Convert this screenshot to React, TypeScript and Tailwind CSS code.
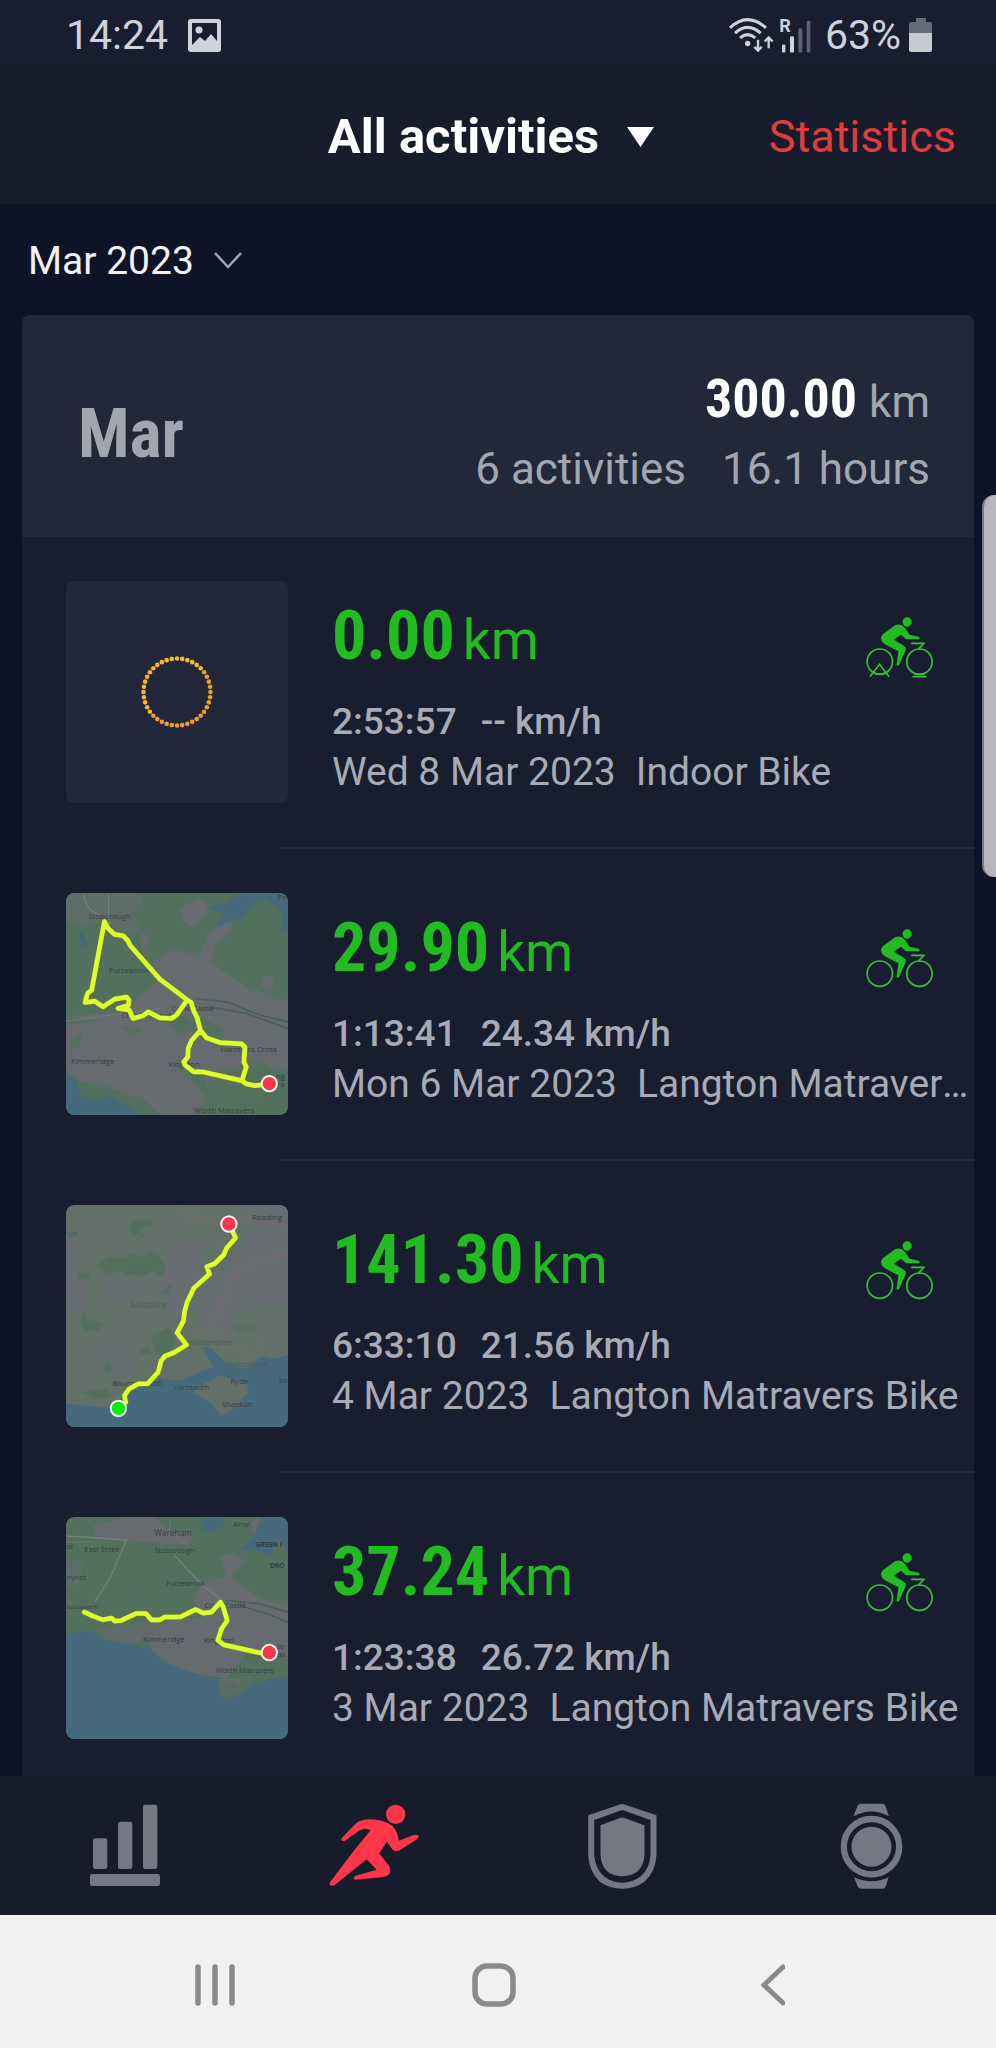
import React from "react";

type Activity = {
  distance: string;
  duration: string;
  speed: string;
  date: string;
  title: string;
  indoor?: boolean;
  thumb: React.ReactNode;
};

const ROUTE = "#dcff2e";

const Marker: React.FC<{ x: number; y: number; fill: string }> = ({ x, y, fill }) => (
  <circle cx={x} cy={y} r="23" fill={fill} stroke="#f4f4f4" strokeWidth="6" />
);

const Route: React.FC<{ d: string }> = ({ d }) => (
  <>
    <path d={d} fill="none" stroke="#6f7f35" strokeWidth="18" strokeLinejoin="round" strokeLinecap="round" />
    <path d={d} fill="none" stroke={ROUTE} strokeWidth="14" strokeLinejoin="round" strokeLinecap="round" />
  </>
);

const MAP_CLASS = "h-full w-full rounded-lg font-['Open_Sans',sans-serif]";

const IndoorThumb = () => (
  <svg viewBox="0 0 222 222" className="h-full w-full" aria-hidden="true">
    {Array.from({ length: 40 }, (_, i) => {
      const a = (i / 40) * Math.PI * 2;
      return (
        <circle
          key={i}
          cx={111 + 33.5 * Math.cos(a)}
          cy={111 + 33.5 * Math.sin(a)}
          r="2.3"
          fill={Math.cos(a) + Math.sin(a) > 0 ? "#f59a2c" : "#f8b52e"}
        />
      );
    })}
  </svg>
);

const LoopMap = () => (
  <svg viewBox="19 24 665 665" className={MAP_CLASS} aria-hidden="true">
    <rect x="19" y="24" width="665" height="665" fill="#52705d" />
    <g fill="#666b70">
      <path d="M19 24H250L245 60L210 85L240 120L225 150L170 130L130 110L60 125L19 110Z" opacity=".55" />
      <path d="M360 70L420 40L445 60L430 100L395 125L365 105Z" />
      <path d="M440 150L480 120L520 110L500 150L470 170L450 230L520 280L570 310L684 350V560L600 540L540 600L450 620L420 560L350 520L330 470L400 430L380 390L300 400L200 410L19 400V395L190 380L290 290L280 230L340 190L420 215Z" />
      <path d="M19 420L180 400L330 410L370 480L340 540L400 590L440 640L400 689H300L260 650L130 600L60 590L19 560Z" />
      <path d="M240 150L262 145L265 190L250 205Z" />
      <circle cx="624" cy="292" r="20" />
      <path d="M440 640L560 620L600 650L500 680Z" opacity=".6" />
    </g>
    <g fill="#52705d">
      <path d="M390 415L430 400L490 430L480 470L420 460Z" />
      <path d="M40 455L70 440L60 480L30 500Z" />
      <path d="M180 425L250 430L220 450Z" />
      <path d="M450 560L540 540L610 520L640 560L684 590V689H520L440 640Z" opacity=".8" />
      <path d="M60 590L130 600L230 640L300 689H120Z" />
    </g>
    <g fill="#466a7b">
      <path d="M19 565L50 585L60 630L110 645L150 630L240 689H19Z" />
      <path d="M450 65L500 55L540 24H684V130L665 140L670 80L640 60L620 40L590 50L560 80L540 110L520 95L480 125L465 120L500 85L455 75Z" />
      <path d="M58 145L70 140L75 160L84 180L75 192L62 165Z" />
    </g>
    <g fill="none" stroke="#7a8183" strokeWidth="3">
      <path d="M70 24Q80 85 130 90M146 24V90L150 120" />
      <path d="M19 408L190 385L300 370" strokeWidth="2" />
    </g>
    <g fill="none" stroke="#496252" strokeWidth="5">
      <path d="M400 340L500 350L600 390L684 410" />
      <path d="M450 365L560 385L684 430" />
    </g>
    <g fill="#343e45" fontSize="23">
      <text x="86" y="101">Stoborough</text>
      <text x="148" y="264">Furzebrook</text>
      <text x="335" y="376">Corfe Castle</text>
      <text x="186" y="398">Church Knowle</text>
      <text x="482" y="500">Harman's Cross</text>
      <text x="34" y="537">Kimmeridge</text>
      <text x="326" y="544">Kingston</text>
      <text x="648" y="580">ng</text>
      <text x="652" y="605">ra</text>
      <text x="402" y="683">Worth Matravers</text>
      <text x="652" y="46">Po</text>
    </g>
    <Route d="M134 110L145 130L165 148L190 152L203 165L212 182L300 282L382 344L394 352L402 378L412 398L422 436L395 466L385 490L384 515L372 530L376 540L402 560L430 560L545 586L560 596L585 601L615 598M422 436L440 458L480 472L545 476L555 486L552 530L559 545L548 580M134 110L96 315L84 324L76 352L105 348L130 365L165 342L200 336L208 345L206 360L175 370L208 374L220 400L250 392L265 380L300 398L335 400L350 390L360 376L382 344" />
    <Marker x={628} y={595} fill="#f83648" />
  </svg>
);

const NorthMap = () => (
  <svg viewBox="19 29 665 665" className={MAP_CLASS} aria-hidden="true">
    <rect x="19" y="29" width="665" height="665" fill="#62706a" />
    <g fill="#676c71">
      <path d="M560 29L684 29V330L600 330L520 360L500 420L420 380L430 290L500 230L580 100Z" />
      <path d="M330 150L430 130L430 230L400 300L350 380L320 330L300 270Z" />
      <path d="M19 130L70 140L50 200L80 300L60 360L19 330Z" />
      <path d="M130 240L260 260L240 310L180 320L120 290Z" opacity=".6" />
      <path d="M100 430L190 450L240 520L210 560L130 520Z" opacity=".6" />
    </g>
    <g fill="#53705e">
      <path d="M108 210L150 185L200 190L215 172L255 188L270 165L300 180L318 215L305 245L285 225L245 242L205 238L180 225L135 235Z" />
      <path d="M210 80L265 70L280 85L240 100L255 125L215 115Z" />
      <path d="M330 280L335 265L318 278L305 298L325 295Z" />
      <path d="M275 420L330 395L345 430L330 480L290 480Z" />
      <path d="M60 380L75 345L85 375L125 380L120 405L75 405Z" />
      <path d="M50 232H90L90 252H55Z" />
      <path d="M245 455H270V475H240Z" />
      <path d="M130 515L150 500L160 530L140 535Z" />
      <path d="M520 390L570 385L590 400L530 415Z" opacity=".6" />
      <path d="M60 590L140 580L160 600L110 610Z" />
    </g>
    <g fill="#466a7b">
      <path d="M19 625L110 632L160 640L200 590L260 570L300 548L360 556L420 530L460 515L440 480L430 450L455 460L500 505L560 520L610 480L640 490L684 480V694H19Z" />
    </g>
    <path d="M400 590L440 560L480 540L560 562L565 590L520 640L485 660L450 620Z" fill="#62706a" />
    <path d="M590 490L684 500V520L590 510Z" fill="#466a7b" />
    <g fill="none" stroke="#7b6862" strokeWidth="4">
      <path d="M355 35Q380 65 430 70L540 62L600 80L684 88" />
      <path d="M684 175L600 195L560 210L515 245L480 340L440 400L400 405L460 410L500 460L570 475" />
      <path d="M440 400L500 430M605 430V480" strokeWidth="3" />
    </g>
    <g fill="#343e45" fontSize="23">
      <text x="577" y="74" fontSize="24">Reading</text>
      <text x="158" y="570">Bournemouth</text>
      <text x="342" y="582">Yarmouth</text>
      <text x="512" y="565">Ryde</text>
      <text x="486" y="633">Shanklin</text>
      <text x="656" y="563">So</text>
    </g>
    <g fill="#505a5e" fontSize="26">
      <text x="210" y="338">Salisbury</text>
      <text x="24" y="124">un</text>
      <text x="385" y="449" fontSize="23">outhampton</text>
      <text x="498" y="515" fontSize="23">Portsmouth</text>
    </g>
    <Route d="M507 86L518 108L527 128L500 158L492 178L464 205L441 214L449 236L402 278L382 320L374 350L371 376L352 412L380 448L345 470L315 482L304 496L295 530L264 564L235 565L208 580L194 600L198 620L178 636" />
    <Marker x={507} y={86} fill="#f83648" />
    <Marker x={176} y={638} fill="#08ec08" />
  </svg>
);

const CoastMap = () => (
  <svg viewBox="19 35 665 665" className={MAP_CLASS} aria-hidden="true">
    <rect x="19" y="35" width="665" height="665" fill="#52705d" />
    <g fill="#666b70">
      <path d="M100 60L150 50L190 35H280L320 70L400 90L380 120L260 110L200 105L110 100Z" />
      <path d="M430 230L500 215L480 150L520 140L560 170L520 200L600 260L684 290V450L560 440L500 520L440 510L350 490L270 430L290 370L330 340L430 340L400 280Z" />
      <path d="M19 170L70 165L60 230L19 250Z" opacity=".6" />
      <path d="M110 370L260 350L300 350L280 400L210 415L140 410Z" opacity=".7" />
      <path d="M575 45L605 40L605 110L585 130Z" />
      <path d="M480 520L540 520L540 550L490 580Z" />
    </g>
    <g fill="#466a7b">
      <path d="M19 385L85 376L130 400L190 415L275 430L300 465L370 490L440 515L472 512L480 570L500 585L540 565L580 535L630 520L684 515V700H19Z" />
      <path d="M430 35H480L500 55L460 80L430 75Z" />
      <path d="M605 35H684V150L660 100L630 150L610 140L575 130L540 135L580 95Z" />
    </g>
    <path d="M510 215L560 185L560 160L640 160L684 210V300L600 280Z" fill="#52705d" />
    <path d="M478 530L530 525L540 545L520 570L492 580Z" fill="#5b6c66" />
    <g fill="none" stroke="#747d7c" strokeWidth="4">
      <path d="M19 92L120 98L200 105L150 220L105 290" />
      <path d="M345 150L380 190L440 250L490 285" />
      <path d="M19 110H100M330 35V80L400 130" strokeWidth="2" />
    </g>
    <g fill="none" stroke="#496252" strokeWidth="5">
      <path d="M500 285L600 295L684 320" />
      <path d="M540 300L620 325L684 350" />
    </g>
    <g fill="#343e45" fontSize="22">
      <text x="283" y="92" fontSize="25">Wareham</text>
      <text x="520" y="66">Arne</text>
      <text x="74" y="139">East Stoke</text>
      <text x="284" y="143">Stoborough</text>
      <text x="21" y="131">ol</text>
      <text x="21" y="224">nynet</text>
      <text x="320" y="243">Furzebrook</text>
      <text x="21" y="312" fontSize="18">st Lulworth</text>
      <text x="434" y="308">Corfe Castle</text>
      <text x="250" y="408">Kimmeridge</text>
      <text x="432" y="411">Kingston</text>
      <text x="468" y="503">Worth Matravers</text>
      <text x="652" y="430">to</text>
      <text x="652" y="454">av</text>
      <text x="588" y="126" fontSize="20" fontWeight="700">GREEN I</text>
      <text x="630" y="187" fontSize="20" fontWeight="700">DRO</text>
    </g>
    <Route d="M74 320L100 332L130 343L156 338L165 347L185 345L230 324L258 324L275 343L300 343L315 335L362 334L408 312L430 323L455 320L482 290L490 305L502 345L485 370L474 404L492 418L600 442L620 441" />
    <Marker x={628} y={441} fill="#f83648" />
  </svg>
);

const BikeIcon: React.FC<{ indoor?: boolean }> = ({ indoor }) => (
  <svg viewBox="48 50 200 186" className="mt-9 h-[62px] w-[67px] shrink-0" aria-hidden="true">
    <g fill="#22bb22">
      <circle cx="171" cy="65" r="14" />
      <path d="M93 116Q91 108 102 99L133 76Q148 68 162 79L178 103L206 109Q211 113 207 117H168L152 103L131 118L162 137Q169 142 166 151L147 193Q142 199 139 193L145 153L104 132Q94 126 93 116Z" />
    </g>
    <g fill="none" stroke="#36c23a" strokeWidth="5">
      <circle cx="89" cy="184" r="38" />
      <circle cx="208" cy="184" r="38" />
      <path d="M183 129H221L204 148" />
      {indoor && <path d="M59 229L88 192L117 229M70 216L78 221H98L106 216M187 229H229M192 221H224" />}
    </g>
  </svg>
);

const activities: Activity[] = [
  { distance: "0.00", duration: "2:53:57", speed: "-- km/h", date: "Wed 8 Mar 2023", title: "Indoor Bike", indoor: true, thumb: <IndoorThumb /> },
  { distance: "29.90", duration: "1:13:41", speed: "24.34 km/h", date: "Mon 6 Mar 2023", title: "Langton Matravers Bike", thumb: <LoopMap /> },
  { distance: "141.30", duration: "6:33:10", speed: "21.56 km/h", date: "4 Mar 2023", title: "Langton Matravers Bike", thumb: <NorthMap /> },
  { distance: "37.24", duration: "1:23:38", speed: "26.72 km/h", date: "3 Mar 2023", title: "Langton Matravers Bike", thumb: <CoastMap /> },
];

const StatusBar = () => (
  <div className="flex h-[66px] shrink-0 items-center justify-between bg-[#181e30] px-16 pt-1 text-[41px] leading-none text-[#d0d1da]">
    <div className="flex items-center gap-5 pl-0.5">
      <span>14:24</span>
      <svg viewBox="0 0 33 33" className="h-[33px] w-[33px]" aria-hidden="true">
        <rect x="0" y="0" width="33" height="33" rx="3" fill="#d0d1da" />
        <path d="M4 4H29V22L23 15L17 22L12 18L4 26Z" fill="#181e30" />
        <circle cx="11" cy="11" r="3.5" fill="#d0d1da" />
      </svg>
    </div>
    <div className="flex items-center">
      <svg viewBox="80 36 255 128" className="mr-3 h-[43px] w-[85px]" aria-hidden="true">
        <g fill="none" stroke="#d0d1da" strokeWidth="9">
          <path d="M86 77Q138 28 194 77M101 93Q138 58 178 93M116 107Q138 88 162 107" />
          <path d="M170 113V145M159 134L170 145L181 134M202 138V107M190 118L202 106L214 118" strokeWidth="7" />
        </g>
        <circle cx="139" cy="124" r="8" fill="#d0d1da" />
        <text x="234" y="90" fontSize="54" fontWeight="700" fill="#d0d1da">R</text>
        <g fill="#d0d1da">
          <rect x="242" y="127" width="10" height="24" rx="4" />
          <rect x="266" y="102" width="12" height="49" rx="4" />
        </g>
        <g fill="#5d6172">
          <rect x="291" y="78" width="12" height="73" rx="4" />
          <rect x="316" y="56" width="11" height="95" rx="4" />
        </g>
      </svg>
      <span>63%</span>
      <svg viewBox="0 0 23 34" className="ml-2 h-[34px] w-[23px]" aria-hidden="true">
        <path d="M7 0H17V4H21Q23 4 23 6V16H0V6Q0 4 2 4H7Z" fill="#666a79" />
        <path d="M0 15H23V32Q23 34 21 34H2Q0 34 0 32Z" fill="#c9cad0" />
      </svg>
    </div>
  </div>
);

const Header = () => (
  <header className="grid h-[138px] shrink-0 grid-cols-[1fr_auto_1fr] items-center bg-[#161c2b] px-10 pt-1">
    <label className="col-start-2 flex items-center gap-7">
      <select
        aria-label="Activity type"
        className="appearance-none bg-transparent text-[49px] leading-[60px] font-bold text-white [field-sizing:content]"
      >
        <option>All activities</option>
        <option>Cycling</option>
        <option>Running</option>
      </select>
      <svg viewBox="0 0 27 20" className="mr-3.5 h-5 w-[27px]" aria-hidden="true">
        <path d="M0 0H27L13.5 20Z" fill="#fff" />
      </svg>
    </label>
    <a href="#statistics" className="justify-self-end text-[45px] leading-[60px] text-[#e03c40]">
      Statistics
    </a>
  </header>
);

const ActivityRow: React.FC<{ activity: Activity }> = ({ activity }) => (
  <li className="relative flex h-[312px] pt-11 pl-11 after:absolute after:right-0 after:bottom-0 after:left-[258px] after:h-0.5 after:bg-[#252a3b]">
    <div className="h-[222px] w-[222px] shrink-0 overflow-hidden rounded-lg bg-[#22273a]">{activity.thumb}</div>
    <div className="ml-11 min-w-0 flex-1 text-[39px] leading-[50px] text-[#a8abb6]">
      <div className="flex justify-between pr-[41px]">
        <p className="flex h-[116px] items-baseline gap-2 pt-2.5 leading-[90px] text-[#22bb22]">
          <span className="font-['Roboto_Condensed',Roboto,sans-serif] text-[68px] font-bold">
            {activity.distance}
          </span>
          <span className="text-[55px]">km</span>
        </p>
        <BikeIcon indoor={activity.indoor} />
      </div>
      <p className="flex gap-6 text-[37px] font-medium">
        <span>{activity.duration}</span>
        <span>{activity.speed}</span>
      </p>
      <p className="flex gap-5 pr-0.5 whitespace-nowrap">
        <span>{activity.date}</span>
        <span className="truncate">{activity.title}</span>
      </p>
    </div>
  </li>
);

const TabBar = () => (
  <nav className="grid h-[139px] shrink-0 grid-cols-4 items-center bg-[#161c2b]">
    <button aria-label="Dashboard" className="flex justify-center">
      <svg viewBox="264 127 210 258" className="h-[86px] w-[70px]" fill="#757784">
        <rect x="273" y="233" width="43" height="92" rx="7" />
        <rect x="348" y="183" width="43" height="142" rx="7" />
        <rect x="423" y="132" width="43" height="193" rx="7" />
        <rect x="264" y="340" width="210" height="36" rx="7" />
      </svg>
    </button>
    <button aria-label="Activities" className="flex justify-center">
      <svg viewBox="988 127 270 258" className="h-[86px] w-[90px]" fill="#ff3648">
        <circle cx="1188" cy="161" r="29" />
        <path d="M1026 233Q1022 243 1036 240L1080 209Q1100 199 1113 209L1060 273L991 365Q988 376 998 375Q1004 375 1010 369L1101 296L1131 327L1068 345Q1058 351 1066 357L1152 349Q1180 342 1168 315L1138 278L1162 244L1179 267Q1187 276 1200 269L1252 236Q1260 228 1255 224Q1250 220 1240 224L1198 240Q1192 200 1166 188Q1140 176 1110 176Q1085 176 1070 187Z" />
      </svg>
    </button>
    <button aria-label="Training" className="flex justify-center">
      <svg viewBox="268 127 206 258" className="h-[86px] w-[69px]" fill="#757784">
        <path fillRule="evenodd" d="M370 129L473 164V283Q470 335 437 363Q408 384 370 384Q332 384 303 363Q271 335 268 283V164ZM370 148L286 178V283Q290 325 315 347Q339 366 370 366Q402 366 426 347Q452 325 455 283V178Z" />
        <path d="M370 170L437 194V283Q433 345 370 347Q309 345 305 283V194Z" />
      </svg>
    </button>
    <button aria-label="Devices" className="flex justify-center">
      <svg viewBox="1022 127 188 258" className="h-[86px] w-[63px]" fill="#757784">
        <circle cx="1116" cy="258" r="83" fill="none" stroke="#757784" strokeWidth="19" />
        <circle cx="1116" cy="258" r="60" />
        <path d="M1074 136Q1077 129 1084 129H1149Q1156 129 1158 136L1168 167Q1116 138 1062 167Z" />
        <path d="M1064 350Q1116 374 1167 350L1159 377Q1156 384 1150 384H1084Q1077 384 1074 377Z" />
      </svg>
    </button>
  </nav>
);

const SystemNav = () => (
  <nav className="grid h-[133px] shrink-0 grid-cols-3 items-center bg-[#f1f1f1] pt-1.5 pr-21 pl-19">
    <button aria-label="Recent apps" className="flex justify-center">
      <svg viewBox="0 0 40 42" className="h-[42px] w-10" stroke="#8a8a8a" strokeWidth="5.5" strokeLinecap="round">
        <path d="M3 3V39M20 3V39M37 3V39" />
      </svg>
    </button>
    <button aria-label="Home" className="flex justify-center">
      <svg viewBox="0 0 44 44" className="h-11 w-11" fill="none" stroke="#8a8a8a" strokeWidth="5.5">
        <rect x="3" y="3" width="38" height="38" rx="12" />
      </svg>
    </button>
    <button aria-label="Back" className="flex justify-center">
      <svg viewBox="0 0 24 42" className="h-[42px] w-6" fill="none" stroke="#8a8a8a" strokeWidth="5">
        <path d="M22 3L3 21L22 39" strokeLinecap="round" />
      </svg>
    </button>
  </nav>
);

const App: React.FC = () => {
  return (
    <div className="relative flex h-screen flex-col bg-[#0e1427] font-[Roboto,sans-serif]">
      <StatusBar />
      <Header />
      <main className="min-h-0 flex-1 overflow-y-auto px-[22px] [scrollbar-width:none]">
        <label className="flex h-[111px] items-center gap-5 pt-0.5 pl-1.5">
          <select
            aria-label="Month"
            className="appearance-none bg-transparent text-[39px] leading-[50px] text-[#f2f2f4] [field-sizing:content]"
          >
            <option>Mar 2023</option>
            <option>Feb 2023</option>
          </select>
          <svg viewBox="0 0 28 17" className="h-[17px] w-7" fill="none" stroke="#a3a6b2" strokeWidth="2.5" aria-hidden="true">
            <path d="M1 1L14 15L27 1" />
          </svg>
        </label>
        <section className="overflow-hidden rounded-t-lg bg-[#181d2f]">
          <div className="flex h-[222px] items-center justify-between bg-[#22273a] pt-4 pr-11 pl-14 text-[#a3a6b0]">
            <h2 className="font-['Roboto_Condensed',Roboto,sans-serif] text-[68px] leading-none font-bold">Mar</h2>
            <div className="text-[44px] leading-[67px]">
              <p className="flex items-baseline justify-end gap-3">
                <span className="font-['Roboto_Condensed',Roboto,sans-serif] text-[54px] font-bold text-white">
                  300.00
                </span>
                <span>km</span>
              </p>
              <p className="flex gap-9">
                <span>6 activities</span>
                <span>16.1 hours</span>
              </p>
            </div>
          </div>
          <ul>
            {activities.map((activity) => (
              <ActivityRow key={activity.date} activity={activity} />
            ))}
          </ul>
        </section>
      </main>
      <TabBar />
      <SystemNav />
      {/* edge panel handle */}
      <div className="absolute top-[495px] right-0 h-[382px] w-3.5 rounded-l-xl border-l-2 border-[#7b7b85] bg-[#b6b6bc]" />
    </div>
  );
};

export default App;
